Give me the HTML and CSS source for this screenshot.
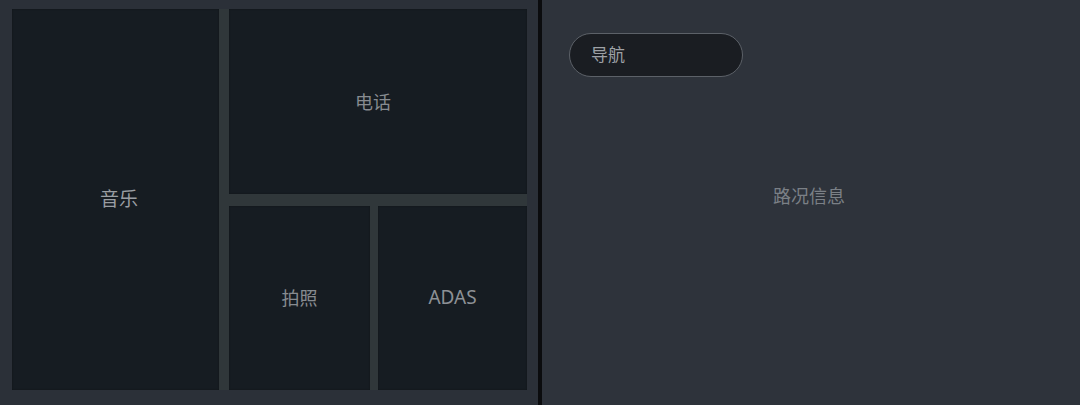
FILE: index.html
```html
<!DOCTYPE html>
<html lang="zh">
<head>
<meta charset="utf-8">
<link rel="stylesheet" href="styles.css">
</head>
<body>
<div class="screen">
  <section class="left">
    <div class="grid">
      <div class="tile music">音乐</div>
      <div class="right-col">
        <div class="tile phone">电话</div>
        <div class="bottom-row">
          <div class="tile photo">拍照</div>
          <div class="tile adas">ADAS</div>
        </div>
      </div>
    </div>
  </section>
  <div class="divider"></div>
  <section class="map">
    <div class="nav-pill">导航</div>
    <div class="traffic">路况信息</div>
  </section>
</div>
</body>
</html>
```

FILE: styles.css
```css
* { box-sizing: border-box; }
html, body { margin: 0; padding: 0; }
body {
  width: 1080px;
  height: 405px;
  overflow: hidden;
  font-family: "Noto Sans", "Noto Sans CJK SC", sans-serif;
  background: #2e333b;
}
.screen {
  display: flex;
  width: 1080px;
  height: 405px;
}
.left {
  width: 538px;
  height: 405px;
  background: #2b3038;
  padding: 9px 11px 15px 12px;
}
.grid {
  display: flex;
  gap: 10px;
  height: 100%;
  background: #30373a;
}
.tile {
  background: #161c22;
  display: flex;
  align-items: center;
  justify-content: center;
  color: #9a9ea3;
  font-size: 18px;
  box-shadow: inset 0 0 2px rgba(0,0,0,0.35);
}
.music {
  width: 207px;
  flex: none;
  font-size: 19px;
  padding-left: 7px;
  padding-bottom: 4px;
}
.right-col {
  flex: 1;
  display: flex;
  flex-direction: column;
  gap: 12px;
}
.phone {
  height: 185px;
  flex: none;
  color: #878b90;
  padding-right: 10px;
  padding-bottom: 2px;
}
.bottom-row {
  flex: 1;
  display: flex;
  gap: 8px;
}
.photo {
  width: 141px;
  flex: none;
  color: #878b90;
  padding-bottom: 3px;
}
.adas {
  flex: 1;
  color: #8d9196;
  font-size: 19px;
  padding-bottom: 3px;
}
.divider {
  width: 4px;
  background: #0b0c0e;
}
.map {
  flex: 1;
  background: #2e333b;
  padding: 33px 0 0 27px;
  display: flex;
  flex-direction: column;
}
.nav-pill {
  width: 174px;
  height: 44px;
  border: 1px solid #5c6168;
  border-radius: 22px;
  background: #1a1d22;
  color: #9ea1a6;
  font-size: 17px;
  line-height: 42px;
  padding-left: 21px;
}
.traffic {
  margin-top: 104px;
  margin-left: -27px;
  text-align: center;
  color: #7b8086;
  font-size: 18px;
  line-height: 30px;
  padding-right: 4px;
}
```
